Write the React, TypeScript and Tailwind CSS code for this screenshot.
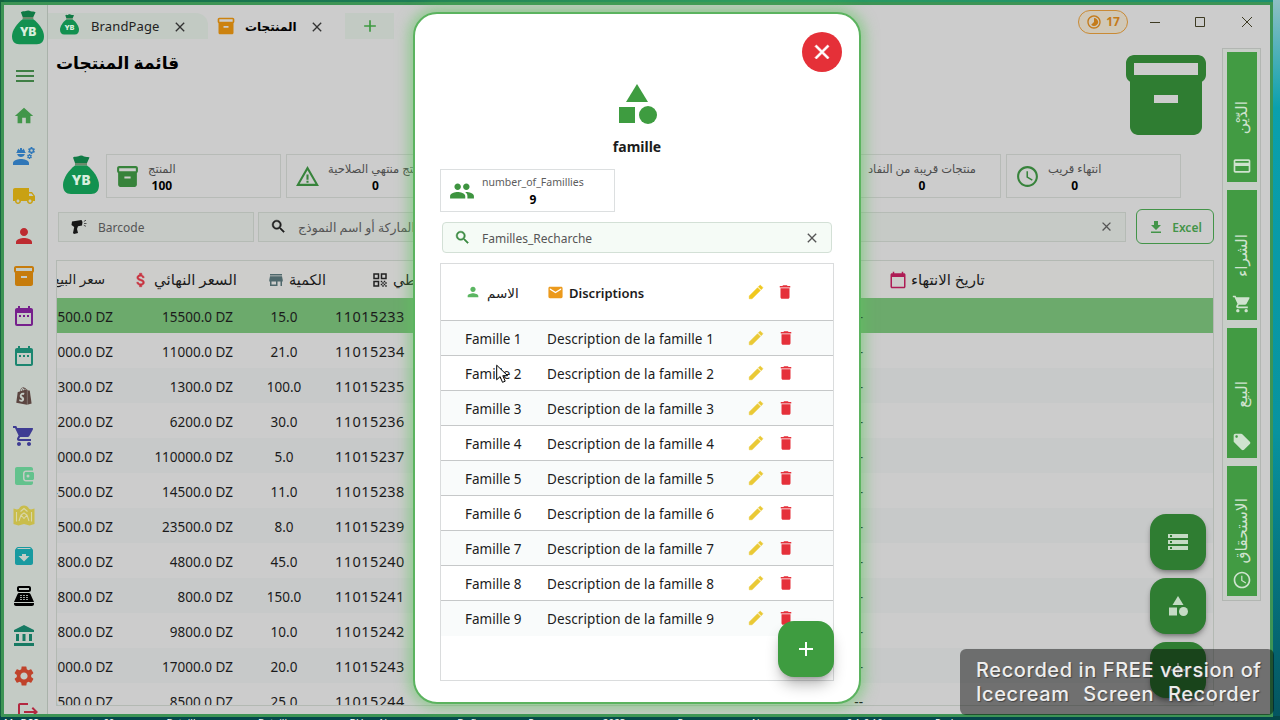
import type { ReactNode } from "react";
import type { IconType } from "react-icons";
import clsx from "clsx";
import {
    MdAccessTime,
    MdAccountBalance,
    MdAdd,
    MdArchive,
    MdAttachMoney,
    MdCalendarToday,
    MdCategory,
    MdClose,
    MdCreditCard,
    MdDateRange,
    MdDelete,
    MdEdit,
    MdEmail,
    MdEngineering,
    MdGroup,
    MdHome,
    MdInventory2,
    MdLocalShipping,
    MdLogout,
    MdMenu,
    MdPerson,
    MdPointOfSale,
    MdQrCode,
    MdSearch,
    MdSettings,
    MdShoppingCart,
    MdStorage,
    MdStore,
    MdTimelapse,
    MdWarningAmber,
} from "react-icons/md";
import { FaShopify } from "react-icons/fa";

const products = [
    { sale: "15500.0 DZ", total: "15500.0 DZ", qty: "15.0", code: "11015233" },
    { sale: "11000.0 DZ", total: "11000.0 DZ", qty: "21.0", code: "11015234" },
    { sale: "1300.0 DZ", total: "1300.0 DZ", qty: "100.0", code: "11015235" },
    { sale: "6200.0 DZ", total: "6200.0 DZ", qty: "30.0", code: "11015236" },
    { sale: "110000.0 DZ", total: "110000.0 DZ", qty: "5.0", code: "11015237" },
    { sale: "14500.0 DZ", total: "14500.0 DZ", qty: "11.0", code: "11015238" },
    { sale: "23500.0 DZ", total: "23500.0 DZ", qty: "8.0", code: "11015239" },
    { sale: "4800.0 DZ", total: "4800.0 DZ", qty: "45.0", code: "11015240" },
    { sale: "800.0 DZ", total: "800.0 DZ", qty: "150.0", code: "11015241" },
    { sale: "9800.0 DZ", total: "9800.0 DZ", qty: "10.0", code: "11015242" },
    { sale: "17000.0 DZ", total: "17000.0 DZ", qty: "20.0", code: "11015243" },
    { sale: "8500.0 DZ", total: "8500.0 DZ", qty: "25.0", code: "11015244" },
];

const families = [1, 2, 3, 4, 5, 6, 7, 8, 9];

// Thickens an icon; the icons' transparent bounding path must stay unstroked
const boldIcon = "[&_path:not([fill=none])]:stroke-current [&_path:not([fill=none])]:stroke-[0.7px]";

function MoneyBag({ className }: { className: string }) {
    return (
        <svg className={className} viewBox="0 0 36 40" preserveAspectRatio="none">
            <path d="M10 2.500c2-1.500 4-.5 5.500-1.300 2-1 4-.8 5.500.3 2 .8 3.500 0 5.500 1L24 8H12z" fill="#107a45" />
            <path d="M12 8h12v2.500H12z" fill="#6c8a6c" />
            <path
                d="M12 10.500C6 15 0 23 0 30c0 6 3 9 8 9h20c5 0 8-3 8-9 0-7-6-15-12-19.500z"
                fill="#129150"
            />
            <text
                x="18"
                y="30"
                textAnchor="middle"
                fontSize="13"
                fontWeight="900"
                fontFamily="Inter, sans-serif"
                fill="#d8eedd"
            >
                YB
            </text>
        </svg>
    );
}

function ScannerGun() {
    return (
        <svg className="h-4 w-4" viewBox="0 0 16 16" fill="#161616">
            <path d="M1 2.500 10.500 1l1 2-.5 3.500-4 .8L6 10l1 4-4 1-1-1 1.200-6L.5 6z" />
            <path
                d="M12.800 2.500 15 1.200M13 4.500h2.500M12.800 6.300l2.200 1"
                stroke="#444"
                strokeWidth=".9"
                fill="none"
            />
        </svg>
    );
}

function MapPlace() {
    return (
        <svg className="h-6 w-6" viewBox="0 0 24 24" fill="#c9bd4b">
            <path d="M1.500 4.500 5 5.500l2-.8C8 2.500 10 1.500 12 1.500s4 1 5 3.200l2 .8 3.500-1V20l-5 1.500-5.500-1.500-5.500 1.500L1.500 20z" />
            <path
                d="M4.500 8v9.500M19.500 8v9.500M7 17l2-6 3-2 3 2 2 6M9 11l3 3.500 3-3.500M8.500 7.500 12 4.500l3.500 3"
                stroke="#d9d7a8"
                strokeWidth="1.100"
                fill="none"
            />
        </svg>
    );
}

function WalletIcon() {
    return (
        <svg className="h-6 w-6" viewBox="0 0 24 24" fill="#63c28d">
            <path d="M5 3h14c1.100 0 2 .9 2 2v1.500h-7c-1.700 0-3 1.300-3 3v5c0 1.700 1.300 3 3 3h7V19c0 1.100-.9 2-2 2H5c-1.100 0-2-.9-2-2V5c0-1.100.9-2 2-2z" />
            <path d="M14 8h6.500c.8 0 1.500.7 1.500 1.500v5c0 .8-.7 1.500-1.500 1.500H14c-.8 0-1.500-.7-1.500-1.500v-5c0-.8.7-1.500 1.500-1.500zm2 2.500a1.500 1.500 0 1 0 0 3 1.500 1.500 0 0 0 0-3z" />
        </svg>
    );
}

function PriceTag({ className }: { className?: string }) {
    return (
        <svg className={className} viewBox="0 0 24 24" fill="currentColor">
            <path d="m21.410 11.580-9-9C12.050 2.220 11.550 2 11 2H4c-1.100 0-2 .9-2 2v7c0 .55.220 1.050.59 1.420l9 9c.36.360.86.580 1.410.580s1.050-.22 1.410-.59l7-7c.37-.36.590-.86.590-1.410s-.23-1.060-.59-1.420zM5.500 7C4.670 7 4 6.330 4 5.500S4.670 4 5.500 4 7 4.670 7 5.500 6.330 7 5.500 7z" />
        </svg>
    );
}

// Filled arrow over a baseline
function DownloadArrow() {
    return (
        <svg className="h-4 w-4" viewBox="0 0 16 16" fill="currentColor">
            <path d="M6 2h4v4h3L8 11 3 6h3zM3 12.500h10V14H3z" />
        </svg>
    );
}

const railItems = [
    { label: "الدّيْن", icon: MdCreditCard, gap: "mt-[22px]" },
    { label: "الشراء", icon: MdShoppingCart, gap: "mt-[17px]" },
    { label: "البيع", icon: PriceTag, gap: "mt-[24px]" },
    { label: "الاستحقاق", icon: MdAccessTime, gap: "mt-[7px]" },
];

function Sidebar() {
    return (
        <aside className="flex w-11 shrink-0 flex-col overflow-hidden border-r border-[#a9b2aa] bg-[#c4cbc5] pl-px">
            <MoneyBag className="ml-[7px] mt-[5px] h-[35px] w-8 shrink-0" />
            <nav className="mt-[19px] flex flex-col items-center gap-4 pr-1 text-2xl">
                <MdMenu className="ml-0.5 shrink-0 text-[#3f7f45]" />
                <MdHome className="my-px h-[22px] w-6 shrink-0 text-[#42964a]" />
                <MdEngineering className="shrink-0 text-[#2f77b8]" />
                <MdLocalShipping className="shrink-0 text-[#c9a112]" />
                <MdPerson className="shrink-0 text-[#bd2b30]" />
                <MdInventory2 className="shrink-0 text-[#c67c0c]" />
                <MdDateRange className="shrink-0 text-[#76208c]" />
                <MdDateRange className="shrink-0 text-[#1b8670]" />
                <FaShopify className="my-[3px] h-[18px] shrink-0 text-[#5b4540]" />
                <MdShoppingCart className="shrink-0 text-[#3e3c93]" />
                <WalletIcon />
                <MapPlace />
                <MdArchive className="shrink-0 text-[#189aa0]" />
                <MdPointOfSale className="shrink-0 text-black" />
                <MdAccountBalance className="shrink-0 text-[#177a63]" />
                <MdSettings className="shrink-0 text-[#c0432b]" />
                <MdLogout className="-mt-1 ml-2 shrink-0 text-[#b32840]" />
            </nav>
        </aside>
    );
}

function TitleBar() {
    return (
        <header className="flex h-[34px] shrink-0 items-start">
            <div className="mt-2 flex h-[26px] w-40 items-center rounded-tr-xl bg-[#c2cac3] pl-3">
                <MoneyBag className="-mt-1 h-[21px] w-[19px]" />
                <span className="ml-3 mt-0.5 w-[69px] text-[13px] tracking-[0.01em] text-[#222]">BrandPage</span>
                <MdClose className="ml-3 mt-0.5 h-4 w-4 text-[#333]" />
            </div>
            <div className="mt-2 flex h-[26px] w-[137px] items-center pl-2">
                <MdInventory2 className="h-5 w-5 text-[#cc820f]" />
                <span className="ml-[9px] mt-0.5 w-[52px] whitespace-nowrap text-[12px] font-bold text-black">المنتجات</span>
                <MdClose className="ml-3 mt-0.5 h-4 w-4 text-[#333]" />
            </div>
            <div className="mt-2 flex h-[26px] w-[49px] items-center justify-center bg-[#c2cac3]">
                <MdAdd className="h-5 w-5 text-[#3d9a40]" />
            </div>
            <div className="ml-auto mr-[18px] mt-[5px] flex items-center">
                <div className="flex h-6 w-[50px] items-center justify-center gap-1 rounded-full border border-[#c98a35] bg-[#d0c8b8] text-[#c47a1a]">
                    <MdTimelapse className="h-4 w-4" />
                    <span className="text-[12px] font-bold">17</span>
                </div>
                <svg className="ml-5 h-3 w-[104px]" viewBox="0 0 104 12" fill="none" stroke="#3d3a22">
                    <path d="M2 6.500h10M47.500 1.500h9v9h-9zM94 1l10 10M104 1 94 11" />
                </svg>
            </div>
        </header>
    );
}

function StatCard({ icon: Icon, label, value }: { icon: IconType; label: string; value: string }) {
    return (
        <div className="flex h-11 w-[175px] shrink-0 items-center border border-[#b7bbb7] pl-2">
            <Icon className="h-[25px] w-[25px] shrink-0 text-[#37833b]" />
            <div className="ml-2 mt-0.5 flex flex-col items-center whitespace-nowrap leading-none">
                <span className="text-[11.500px] leading-[17px] text-[#4d4d4d]">{label}</span>
                <span className="text-[12px] font-bold leading-[18px] text-black">{value}</span>
            </div>
        </div>
    );
}

function ProductTable() {
    return (
        <div className="mt-4 h-[446px] overflow-hidden border border-[#b3b9b3] text-[13.500px] text-[#1b1b1b]">
            <div className="grid h-[37px] grid-cols-[56px_120px_102px_90px_438px_1fr] items-center whitespace-nowrap bg-[#cdcdcb]">
                <div className="flex justify-end overflow-hidden pr-2">سعر البيع</div>
                <div className="-mr-1 flex items-center justify-end gap-1">
                    <MdAttachMoney className={clsx("h-[18px] w-[18px] text-[#c8323f]", boldIcon)} />
                    <span className="text-[15px]">السعر النهائي</span>
                </div>
                <div className="flex items-center gap-1 pl-[34px]">
                    <MdStore className="h-[18px] w-[18px] shrink-0 text-[#4f686c]" />
                    <span className="text-[14.500px]">الكمية</span>
                </div>
                <div className="flex items-center gap-1 pl-9">
                    <MdQrCode className="h-[18px] w-[18px] shrink-0 text-[#222]" />
                    <span className="text-[14.500px]">الرمز الشريطي</span>
                </div>
                <div />
                <div className="flex items-center gap-1 pl-[26px]">
                    <MdCalendarToday className="h-[18px] w-[18px] text-[#ae1c55]" />
                    <span className="text-[15px]">تاريخ الانتهاء</span>
                </div>
            </div>
            {products.map((p, i) => (
                <div
                    key={p.code}
                    className={clsx(
                        "grid h-[35px] grid-cols-[56px_120px_102px_90px_438px_1fr] items-center whitespace-nowrap pt-[3px]",
                        i === 0 && "bg-[#6caa6c]",
                        i > 0 && i % 2 === 0 && "bg-[#c7c9c9]"
                    )}
                >
                    <div className="flex justify-end overflow-hidden">{p.sale}</div>
                    <div className="text-right">{p.total}</div>
                    <div className="text-center">{p.qty}</div>
                    <div className="text-[14.500px] tracking-[0.03em]">{p.code}</div>
                    <div className="text-right">--</div>
                </div>
            ))}
        </div>
    );
}

function SideRail() {
    return (
        <div className="ml-2 mt-[9px] flex h-[553px] w-[39px] shrink-0 flex-col gap-2 border border-[#b2b6b2] bg-[#c8cec8] px-1 pt-[3px]">
            {railItems.map(({ label, icon: Icon, gap }) => (
                <div
                    key={label}
                    className="flex h-[130px] w-[30px] flex-col items-center justify-end bg-[#429b43] pb-1.5 text-[#cfe3cf]"
                >
                    <span className="rotate-180 text-[15.500px] leading-none [writing-mode:vertical-rl]">{label}</span>
                    <Icon className={clsx("h-5 w-5 shrink-0", gap)} />
                </div>
            ))}
        </div>
    );
}

function Fab({ children }: { children: ReactNode }) {
    return (
        <button className="flex h-14 w-14 items-center justify-center rounded-2xl bg-[#2f7d32] text-2xl text-[#c5dbc5] shadow-md shadow-black/30">
            {children}
        </button>
    );
}

function FamilyDialog() {
    return (
        <div className="absolute left-[413px] top-[12px] h-[692px] w-[448px] rounded-3xl border-2 border-[#5bb35f] bg-white px-[25px] text-[#1c1c1c] shadow-[0_0_14px_4px_rgba(90,200,90,0.55)]">
            <div className="-mr-2 flex justify-end pt-[18px]">
                <button className="flex h-10 w-10 items-center justify-center rounded-full bg-[#e53038] text-white">
                    <MdClose className={clsx("h-6 w-6", boldIcon)} />
                </button>
            </div>
            <div className="mt-2 flex flex-col items-center">
                <MdCategory className="h-12 w-12 text-[#3e9c40]" />
                <h2 className="mb-px mt-[7px] text-sm font-bold leading-6">famille</h2>
            </div>
            <div className="mt-[9px] flex h-[43px] w-[175px] items-center border border-[#dcdfe0] pl-2">
                <MdGroup className="h-[26px] w-[26px] text-[#3e9440]" />
                <div className="ml-[7px] flex flex-col items-center">
                    <span className="text-[10.500px] leading-[17px] text-[#5c5c5c]">number_of_Famillies</span>
                    <span className="text-[12px] font-bold leading-[17px] text-black">9</span>
                </div>
            </div>
            <div className="ml-0.5 mt-2.5 flex h-[31px] w-[390px] items-center rounded border border-[#d3e0d6] bg-[#f5fbf6] px-[11px]">
                <MdSearch className={clsx("h-[17px] w-[17px] text-[#3b8a42]", boldIcon)} />
                <span className="ml-[11px] mt-[3px] text-[12px] text-[#555]">Familles_Recharche</span>
                <MdClose className="ml-auto h-4 w-4 text-[#555]" />
            </div>
            <div className="mt-2.5 h-[418px] w-[394px] border border-[#dadcdd]">
                <div className="flex h-[57px] items-center border-b border-[#c6c8c9] pl-6">
                    <div className="flex w-[82px] items-center gap-1.5">
                        <MdPerson className="h-4 w-4 text-[#5bb662]" />
                        <span className="mt-[3px] whitespace-nowrap text-[13.500px] font-medium">الاسم</span>
                    </div>
                    <MdEmail className="h-[17px] w-[17px] text-[#ec9a1c]" />
                    <span className="ml-[5px] mt-[3px] w-[178px] text-[13px] font-semibold">Discriptions</span>
                    <MdEdit className={clsx("h-[18px] w-[18px] text-[#f0c81e]", boldIcon)} />
                    <MdDelete className="ml-[11px] h-[18px] w-[18px] text-[#e5303a]" />
                </div>
                {families.map((n) => (
                    <div
                        key={n}
                        className="flex h-[35px] items-center border-b border-[#c6c8c9] pl-6 text-[13.500px] last:border-transparent even:bg-[#f9fbfb]"
                    >
                        <span className="mt-[3px] w-[82px]">Famille {n}</span>
                        <span className="mt-[3px] w-[200px] tracking-[0.1px]">Description de la famille {n}</span>
                        <MdEdit className={clsx("h-[18px] w-[18px] text-[#eac935]", boldIcon)} />
                        <MdDelete className="ml-3 h-[18px] w-[18px] text-[#e5303a]" />
                    </div>
                ))}
            </div>
            <button className="absolute bottom-[25px] right-[25px] flex h-14 w-14 items-center justify-center rounded-2xl bg-[#3e9c40] text-white shadow-lg shadow-black/30">
                <MdAdd className="h-6 w-6" />
            </button>
        </div>
    );
}

export default function App() {
    return (
        <div className="relative h-[720px] w-[1280px] overflow-hidden bg-[linear-gradient(#8fbfc4,#0aa0ad_15%,#08939f_60%,#04545f)] font-['Noto_Sans','DejaVu_Sans',sans-serif]">
            {/* Desktop strips around the window */}
            <div className="absolute left-0 top-0 h-1 w-[1273px] bg-[linear-gradient(90deg,#126b45,#1d7a55_30%,#2c9a60_60%,#1b8f70)]" />
            <div className="absolute inset-y-0 left-0 w-1 bg-[#14623f]" />
            <div className="absolute bottom-0 left-0 h-1 w-full overflow-hidden bg-[#04474a]">
                <p className="flex gap-[52px] whitespace-nowrap pl-1 pt-px text-[10px] leading-3 text-white">
                    <span>Ms DSS</span>
                    <span>to 60</span>
                    <span>Batailles</span>
                    <span>Batailles</span>
                    <span>DVers News</span>
                    <span>Defi</span>
                    <span>Pour</span>
                    <span>2023</span>
                    <span>Pour</span>
                    <span>Nouveau</span>
                    <span>6.1.6.10</span>
                    <span>Perl</span>
                </p>
            </div>

            {/* Main window */}
            <div className="absolute left-px top-0.5 flex h-[715px] w-[1272px] border-[3px] border-[#3d9455] bg-[#cccccc]">
                <Sidebar />
                <main className="flex flex-1 flex-col">
                    <TitleBar />
                    <div className="flex">
                        <section className="w-[1166px] pl-2">
                            <div className="flex h-[115px] justify-between">
                                <h1 className="pt-2.5 text-[17px] font-bold leading-7 text-black">قائمة المنتجات</h1>
                                <MdInventory2 className="mt-2 h-24 w-24 text-[#2f7d32]" />
                            </div>
                            <div className="flex items-center gap-[5px] pl-[7px]">
                                <MoneyBag className="mb-0.5 mr-0.5 h-10 w-9" />
                                <StatCard icon={MdInventory2} label="المنتج" value="100" />
                                <StatCard icon={MdWarningAmber} label="منتج منتهي الصلاحية" value="0" />
                                <StatCard icon={MdInventory2} label="منتجات" value="0" />
                                <StatCard icon={MdInventory2} label="المنتج" value="0" />
                                <StatCard icon={MdWarningAmber} label="منتجات قريبة من النفاد" value="0" />
                                <StatCard icon={MdAccessTime} label="انتهاء قريب" value="0" />
                            </div>
                            <div className="mt-[11px] flex items-center pl-0.5 text-[12.500px] text-[#555]">
                                <div className="flex h-[30px] w-[196px] items-center gap-[11px] border border-[#b5bbb5] bg-[#c6cac6] pl-3">
                                    <ScannerGun />
                                    <span className="mt-[3px] text-[12px]">Barcode</span>
                                </div>
                                <div className="ml-1 flex h-[30px] w-[868px] items-center border border-[#b5bbb5] bg-[#c6cac6] px-[11px]">
                                    <MdSearch className={clsx("h-[17px] w-[17px] text-[#1e1e1e]", boldIcon)} />
                                    <span className="ml-[11px] mt-[3px] whitespace-nowrap">
                                        البحث عن طريق الماركة أو اسم النموذج
                                    </span>
                                    <MdClose className="ml-auto h-[15px] w-[15px]" />
                                </div>
                                <button className="ml-2.5 flex h-[35px] w-[78px] items-center justify-center gap-2 rounded-md border border-[#439449] text-[12px] font-semibold text-[#439449]">
                                    <DownloadArrow />
                                    <span className="mt-0.5">Excel</span>
                                </button>
                            </div>
                            <ProductTable />
                        </section>
                        <SideRail />
                    </div>
                </main>
            </div>

            <div className="absolute left-[1150px] top-[514px] flex flex-col gap-2">
                <Fab>
                    <MdStorage />
                </Fab>
                <Fab>
                    <MdCategory />
                </Fab>
                <Fab>
                    <MdAdd />
                </Fab>
            </div>

            <FamilyDialog />

            {/* Mouse pointer */}
            <svg className="absolute left-[496px] top-[364px] h-5 w-[13px]" viewBox="0 0 13 20" fill="white" stroke="black">
                <path d="M.7 1.200v14.600l3.400-3.200 2.400 5.700 2.700-1.100-2.400-5.500h4.800z" />
            </svg>

            {/* Recorder watermark */}
            <div className="absolute left-[960px] top-[649px] flex h-[66px] w-[314px] flex-col justify-center rounded-md bg-black/45 pl-4 pr-[14px] font-['Inter',sans-serif] text-[20px] font-medium leading-6 tracking-[0.03em] text-white/90 [text-shadow:1px_1px_1px_#444]">
                <span className="whitespace-nowrap">Recorded in FREE version of</span>
                <span className="flex justify-between">
                    <span>Icecream</span>
                    <span>Screen</span>
                    <span>Recorder</span>
                </span>
            </div>
        </div>
    );
}
